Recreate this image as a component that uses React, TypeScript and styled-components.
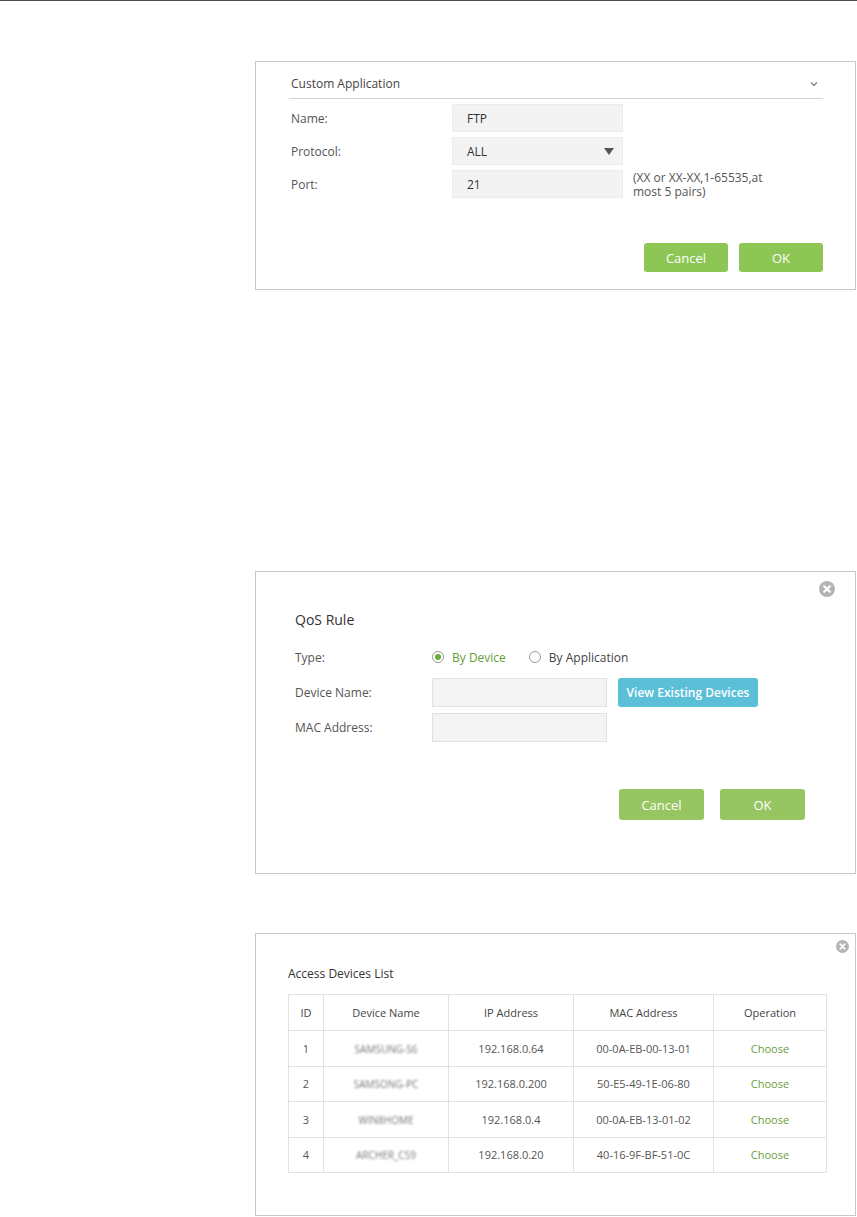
import React from 'react';
import styled, { createGlobalStyle } from 'styled-components';

const GlobalStyle = createGlobalStyle`
	html, body {
		margin: 0;
		padding: 0;
		background: #fff;
	}
	body {
		font-family: "Open Sans", "Liberation Sans", sans-serif;
		color: #555;
	}
`;

const devices = [
	{ id: 1, name: 'SAMSUNG-S6', ip: '192.168.0.64', mac: '00-0A-EB-00-13-01' },
	{ id: 2, name: 'SAMSONG-PC', ip: '192.168.0.200', mac: '50-E5-49-1E-06-80' },
	{ id: 3, name: 'WIN8HOME', ip: '192.168.0.4', mac: '00-0A-EB-13-01-02' },
	{ id: 4, name: 'ARCHER_C59', ip: '192.168.0.20', mac: '40-16-9F-BF-51-0C' },
];

const CloseIcon = ({ size }: { size: number }) => (
	<svg width={size} height={size} viewBox="0 0 16 16">
		<circle cx="8" cy="8" r="8" fill="#b4b4b4" />
		<path d="M5.2 5.2 L10.8 10.8 M10.8 5.2 L5.2 10.8" stroke="#fff" strokeWidth="2.2" strokeLinecap="round" />
	</svg>
);

const App = () => {
	return (
		<Page>
			<GlobalStyle />

			<CustomPanel>
				<PanelHeader>
					<span>Custom Application</span>
					<svg width="8" height="6" viewBox="0 0 8 6">
						<polyline points="1,1.5 4,4.5 7,1.5" fill="none" stroke="#777" strokeWidth="1.2" />
					</svg>
				</PanelHeader>
				<CustomForm>
					<CustomRow>
						<CustomLabel>Name:</CustomLabel>
						<SoftInput>FTP</SoftInput>
					</CustomRow>
					<CustomRow>
						<CustomLabel>Protocol:</CustomLabel>
						<SoftSelect>
							<span>ALL</span>
							<svg width="10" height="7" viewBox="0 0 10 7">
								<polygon points="0,0 10,0 5,7" fill="#555" />
							</svg>
						</SoftSelect>
					</CustomRow>
					<CustomRow>
						<CustomLabel>Port:</CustomLabel>
						<SoftInput>21</SoftInput>
						<Hint>
							<span>(XX or XX-XX,1-65535,at</span>
							<span>most 5 pairs)</span>
						</Hint>
					</CustomRow>
				</CustomForm>
				<ButtonRow $gap={11} $top={45}>
					<GreenButton $w={84} $h={29} $tone="#8dc655">Cancel</GreenButton>
					<GreenButton $w={84} $h={29} $tone="#8dc655">OK</GreenButton>
				</ButtonRow>
			</CustomPanel>

			<QosPanel>
				<CloseSpot $top={9} $right={20}>
					<CloseIcon size={16} />
				</CloseSpot>
				<QosTitle>QoS Rule</QosTitle>
				<TypeRow>
					<QosLabel>Type:</QosLabel>
					<RadioOption $active>
						<Radio $checked />
						By Device
					</RadioOption>
					<RadioOption>
						<Radio />
						By Application
					</RadioOption>
				</TypeRow>
				<FieldRow $top={9}>
					<QosLabel>Device Name:</QosLabel>
					<PlainInput />
					<BlueButton>View Existing Devices</BlueButton>
				</FieldRow>
				<FieldRow $top={6}>
					<QosLabel>MAC Address:</QosLabel>
					<PlainInput />
				</FieldRow>
				<ButtonRow $gap={16} $top={47}>
					<GreenButton $w={85} $h={31} $tone="#96c561">Cancel</GreenButton>
					<GreenButton $w={85} $h={31} $tone="#96c561">OK</GreenButton>
				</ButtonRow>
			</QosPanel>

			<ListPanel>
				<CloseSpot $top={6} $right={6}>
					<CloseIcon size={13} />
				</CloseSpot>
				<ListTitle>Access Devices List</ListTitle>
				<DeviceTable>
					<colgroup>
						<col style={{ width: 35 }} />
						<col style={{ width: 125 }} />
						<col style={{ width: 125 }} />
						<col style={{ width: 140 }} />
						<col style={{ width: 113 }} />
					</colgroup>
					<thead>
						<tr>
							<HeadCell>ID</HeadCell>
							<HeadCell>Device Name</HeadCell>
							<HeadCell>IP Address</HeadCell>
							<HeadCell>MAC Address</HeadCell>
							<HeadCell>Operation</HeadCell>
						</tr>
					</thead>
					<tbody>
						{devices.map((d) => (
							<tr key={d.id}>
								<Cell>{d.id}</Cell>
								<Cell>
									<Blurred>{d.name}</Blurred>
								</Cell>
								<Cell>{d.ip}</Cell>
								<Cell>{d.mac}</Cell>
								<Cell>
									<ChooseLink>Choose</ChooseLink>
								</Cell>
							</tr>
						))}
					</tbody>
				</DeviceTable>
			</ListPanel>
		</Page>
	);
};

const Page = styled.div`
	display: flex;
	flex-direction: column;
	width: 857px;
	min-height: 1217px;
	box-sizing: border-box;
	border-top: 1px solid #4a4a4a;
	padding-left: 255px;
`;

const Panel = styled.div`
	position: relative;
	box-sizing: border-box;
	width: 601px;
	border: 1px solid #c8c8c8;
	background: #fff;
`;

const CustomPanel = styled(Panel)`
	margin-top: 60px;
	padding: 14px 32px 17px 33px;
`;

const PanelHeader = styled.div`
	display: flex;
	justify-content: space-between;
	align-items: center;
	height: 16px;
	padding: 0 5px 6px 2px;
	border-bottom: 1px solid #d9d3cf;
	font-size: 12px;
	line-height: 16px;
	color: #444;
`;

const CustomForm = styled.div`
	display: flex;
	flex-direction: column;
	gap: 5px;
	margin-top: 5px;
`;

const CustomRow = styled.div`
	display: flex;
	align-items: center;
	height: 28px;
`;

const CustomLabel = styled.div`
	width: 161px;
	padding-left: 2px;
	font-size: 12px;
	color: #555;
`;

const SoftInput = styled.div`
	display: flex;
	align-items: center;
	box-sizing: border-box;
	width: 171px;
	height: 28px;
	padding-left: 14px;
	background: #f3f3f3;
	border: 1px solid #ececec;
	font-size: 12px;
	color: #333;
`;

const SoftSelect = styled(SoftInput)`
	justify-content: space-between;
	padding-right: 8px;
`;

const Hint = styled.div`
	display: flex;
	flex-direction: column;
	margin-left: 10px;
	margin-top: 2px;
	font-size: 12px;
	line-height: 14px;
	color: #555;
`;

const ButtonRow = styled.div<{ $gap: number; $top: number }>`
	display: flex;
	justify-content: flex-end;
	gap: ${(p) => p.$gap}px;
	margin-top: ${(p) => p.$top}px;
`;

const GreenButton = styled.button<{ $w: number; $h: number; $tone: string }>`
	width: ${(p) => p.$w}px;
	height: ${(p) => p.$h}px;
	padding: 0;
	border: none;
	border-radius: 3px;
	background: ${(p) => p.$tone};
	color: #fff;
	font-family: "Open Sans", "Liberation Sans", sans-serif;
	font-size: 13px;
`;

const CloseSpot = styled.div<{ $top: number; $right: number }>`
	position: absolute;
	top: ${(p) => p.$top}px;
	right: ${(p) => p.$right}px;
	display: flex;
`;

const QosPanel = styled(Panel)`
	margin-top: 281px;
	padding: 38px 50px 53px 39px;
`;

const QosTitle = styled.div`
	font-size: 14px;
	line-height: 20px;
	color: #333;
`;

const TypeRow = styled.div`
	display: flex;
	align-items: center;
	height: 24px;
	margin-top: 15px;
`;

const FieldRow = styled.div<{ $top: number }>`
	display: flex;
	align-items: center;
	margin-top: ${(p) => p.$top}px;
`;

const QosLabel = styled.div`
	width: 137px;
	font-size: 12px;
	color: #555;
`;

const RadioOption = styled.label<{ $active?: boolean }>`
	display: flex;
	align-items: center;
	gap: 8px;
	margin-right: 23px;
	font-size: 12px;
	color: ${(p) => (p.$active ? '#64a035' : '#444')};
`;

const Radio = styled.span<{ $checked?: boolean }>`
	display: flex;
	align-items: center;
	justify-content: center;
	box-sizing: border-box;
	width: 12px;
	height: 12px;
	border: 1px solid #9a9a9a;
	border-radius: 50%;
	background: #fff;

	&::after {
		content: '';
		width: 6px;
		height: 6px;
		border-radius: 50%;
		background: ${(p) => (p.$checked ? '#6aad3d' : 'transparent')};
	}
`;

const PlainInput = styled.div`
	box-sizing: border-box;
	width: 175px;
	height: 29px;
	background: #f4f4f4;
	border: 1px solid #e2e2e2;
`;

const BlueButton = styled.button`
	width: 140px;
	height: 29px;
	margin-left: 11px;
	padding: 0;
	border: none;
	border-radius: 3px;
	background: #5bbfd8;
	color: #fff;
	font-family: "Open Sans", "Liberation Sans", sans-serif;
	font-size: 12px;
	font-weight: 600;
`;

const ListPanel = styled(Panel)`
	margin-top: 59px;
	padding: 32px 0 42px 32px;
`;

const ListTitle = styled.div`
	font-size: 12px;
	line-height: 16px;
	color: #333;
`;

const DeviceTable = styled.table`
	width: 538px;
	margin-top: 12px;
	border-collapse: collapse;
	table-layout: fixed;
	border: 1px solid #dcdcdc;
`;

const HeadCell = styled.th`
	height: 35px;
	padding: 0;
	border: 1px solid #e2e2e2;
	font-size: 11px;
	font-weight: normal;
	color: #444;
	text-align: center;
`;

const Cell = styled.td`
	height: 34.5px;
	padding: 0;
	border: 1px solid #e2e2e2;
	font-size: 11px;
	color: #555;
	text-align: center;
`;

const Blurred = styled.span`
	display: inline-block;
	filter: blur(1.3px);
	color: #777;
	font-size: 10px;
`;

const ChooseLink = styled.span`
	color: #6a9d3a;
`;

export default App;
